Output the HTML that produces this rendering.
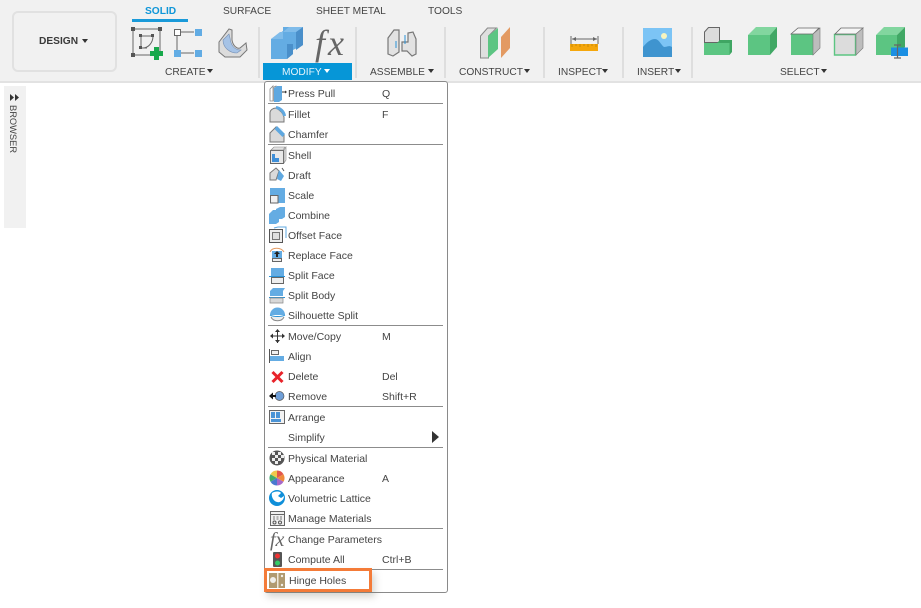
<!DOCTYPE html>
<html><head><meta charset="utf-8">
<style>
html,body{margin:0;padding:0;background:#fff;}
#p{position:relative;width:921px;height:608px;overflow:hidden;background:#fff;font-family:"Liberation Sans",sans-serif;font-size:10.5px;color:#444;}
#p div{position:absolute;white-space:nowrap;}
.t{line-height:14px;}
.l{line-height:14px;font-size:10.2px;top:66px;}
.sep{width:175px;height:1px;left:268px;background:#8c8c8c;}
.m{left:288px;line-height:14px;margin-top:1px;}
.k{left:382px;line-height:14px;margin-top:1px;}
svg{position:absolute;left:0;top:0;}
</style></head><body><div id="p">
<div style="left:0;top:0;width:921px;height:81px;background:#f1f1f1;border-bottom:2px solid #e2e2e2;"></div>
<div style="left:12px;top:11px;width:101px;height:57px;border:2px solid #e1e1e1;border-radius:6px;"></div>
<div class="t" style="left:39px;top:35px;font-weight:bold;color:#3a3a3a;font-size:10.2px;">DESIGN</div>
<div class="t" style="left:145px;top:5px;color:#0f96d8;font-weight:bold;font-size:10.2px;">SOLID</div>
<div style="left:132px;top:19px;width:56px;height:3px;background:#1a9ad9;"></div>
<div class="t" style="left:223px;top:5px;font-size:10.2px;">SURFACE</div>
<div class="t" style="left:316px;top:5px;font-size:10.2px;">SHEET METAL</div>
<div class="t" style="left:428px;top:5px;font-size:10.2px;">TOOLS</div>
<div style="left:263px;top:63px;width:89px;height:17px;background:#0696d7;"></div>
<div class="l" style="left:165px;">CREATE</div>
<div class="l" style="left:282px;color:#e4f3fb;">MODIFY</div>
<div class="l" style="left:370px;">ASSEMBLE</div>
<div class="l" style="left:459px;">CONSTRUCT</div>
<div class="l" style="left:558px;">INSPECT</div>
<div class="l" style="left:637px;">INSERT</div>
<div class="l" style="left:780px;">SELECT</div>
<div class="t" style="left:4px;top:86px;width:22px;height:142px;background:#f1f1f1;"></div>
<div style="left:7px;top:105px;transform-origin:0 0;transform:translate(12px,0) rotate(90deg);line-height:12px;font-size:9.3px;">BROWSER</div>
<div style="left:264px;top:81px;width:182px;height:510px;background:#fff;border:1px solid #8a8a8a;border-radius:3px;"></div>
<div class="sep" style="top:103px"></div><div class="sep" style="top:144px"></div><div class="sep" style="top:325px"></div><div class="sep" style="top:406px"></div><div class="sep" style="top:447px"></div><div class="sep" style="top:528px"></div><div class="sep" style="top:569px"></div>
<div class="m" style="top:86px">Press Pull</div><div class="k" style="top:86px">Q</div>
<div class="m" style="top:107px">Fillet</div><div class="k" style="top:107px">F</div>
<div class="m" style="top:127px">Chamfer</div>
<div class="m" style="top:148px">Shell</div>
<div class="m" style="top:168px">Draft</div>
<div class="m" style="top:188px">Scale</div>
<div class="m" style="top:208px">Combine</div>
<div class="m" style="top:228px">Offset Face</div>
<div class="m" style="top:248px">Replace Face</div>
<div class="m" style="top:268px">Split Face</div>
<div class="m" style="top:288px">Split Body</div>
<div class="m" style="top:308px">Silhouette Split</div>
<div class="m" style="top:329px">Move/Copy</div><div class="k" style="top:329px">M</div>
<div class="m" style="top:349px">Align</div>
<div class="m" style="top:369px">Delete</div><div class="k" style="top:369px">Del</div>
<div class="m" style="top:389px">Remove</div><div class="k" style="top:389px">Shift+R</div>
<div class="m" style="top:410px">Arrange</div>
<div class="m" style="top:430px">Simplify</div>
<div class="m" style="top:451px">Physical Material</div>
<div class="m" style="top:471px">Appearance</div><div class="k" style="top:471px">A</div>
<div class="m" style="top:491px">Volumetric Lattice</div>
<div class="m" style="top:511px">Manage Materials</div>
<div class="m" style="top:532px">Change Parameters</div>
<div class="m" style="top:552px">Compute All</div><div class="k" style="top:552px">Ctrl+B</div>
<div class="m" style="top:573px;left:289px">Hinge Holes</div>
<div style="left:264px;top:568px;width:102px;height:18px;border:3px solid #f47b38;box-shadow:3px 5px 7px rgba(110,110,95,.28);"></div>
<svg width="921" height="608" viewBox="0 0 921 608">
<!-- separators -->
<g fill="#dedede"><rect x="258" y="27" width="2" height="51"/><rect x="355" y="27" width="2" height="51"/><rect x="444" y="27" width="2" height="51"/><rect x="543" y="27" width="2" height="51"/><rect x="622" y="27" width="2" height="51"/><rect x="691" y="27" width="2" height="51"/></g>
<!-- carets -->
<g fill="#333"><path d="M82 39h6l-3 4z"/><path d="M207 69h6l-3 4z"/><path d="M428 69h6l-3 4z"/><path d="M524 69h6l-3 4z"/><path d="M602 69h6l-3 4z"/><path d="M675 69h6l-3 4z"/><path d="M821 69h6l-3 4z"/><path d="M432 431l7 6-7 6z"/><path d="M10 94l4 3.500-4 3.500zM15 94l4 3.500-4 3.500z"/></g>
<path d="M324 69h6l-3 4z" fill="#fff"/>
<!-- create sketch -->
<g fill="none" stroke="#666" stroke-width="1"><rect x="133" y="29" width="27" height="26"/><path d="M141 36v12h6M141 36h12M153 36c0 7-5 12-10 12" /></g>
<g fill="#555"><rect x="131" y="27" width="4" height="4"/><rect x="158" y="27" width="4" height="4"/><rect x="131" y="53" width="4" height="4"/><rect x="139" y="34" width="3" height="3"/><rect x="151" y="34" width="3" height="3"/><rect x="139" y="46" width="3" height="3"/></g>
<path d="M154 47h5v4h4v5h-4v4h-5v-4h-4v-5h4z" fill="#17a84b"/>
<!-- form -->
<rect x="174.500" y="29.500" width="6" height="6" fill="#fff" stroke="#666"/>
<path d="M181 32h13M177 36v15M181 53h13" stroke="#666" fill="none"/>
<g fill="#62ace4"><rect x="195" y="29" width="7" height="7"/><rect x="174" y="50" width="7" height="7"/><rect x="195" y="50" width="7" height="7"/></g>
<!-- ribbed bracket -->
<path d="M219 42l10-13 3 1v10c1 6 5 9 8 8l6-5 1 7-7 7h-15l-6-5z" fill="#dcdcdc" stroke="#777"/>
<path d="M223 40c0 8 7 13 14 13l4-3c-6 0-10-4-11-12l-1-4z" fill="#a6c3e6" stroke="#7891b5" stroke-width=".6"/>
<!-- combine -->
<path d="M283 27h20v18l-10 5v4l-6 5h-16v-20l12-8z" fill="#64ace3"/>
<path d="M296 32l7-5v18l-7 5zM287 44l6 0v10l-6 5z" fill="#4a8fca"/><path d="M283 32l6-5h14l-7 5zM271 39l9-7h3v7z" fill="#80bcea"/>
<!-- assemble -->
<path d="M388 38l6-8h5v22l-6 4-5-2z" fill="#e2e2e2" stroke="#777" stroke-width="1.200"/>
<path d="M408 42v-9l5-1 3 7 0 15-4 2-5-5h-5v-9z" fill="#e2e2e2" stroke="#777" stroke-width="1.200"/>
<path d="M396 41v7M405 35v9" stroke="#2a91d5" stroke-width="1"/>
<!-- construct -->
<path d="M480.500 36l7-8h9l-8 8v22h-8z" fill="#dfdfdf" stroke="#888"/>
<path d="M488 36l10-8v21l-10 9z" fill="#5dc583"/><path d="M501 37l9-10v21l-9 10z" fill="#e39a62"/>
<!-- inspect -->
<path d="M571 36v8M598 36v8" stroke="#666"/><path d="M572 39h25" stroke="#666"/><path d="M572 39l4-2v4zM597 39l-4-2v4z" fill="#666"/>
<rect x="570" y="44" width="28" height="7" fill="#f5a70c"/><path d="M572 44v3M576 44v2M580 44v3M584 44v2M588 44v3M592 44v2M596 44v3" stroke="#b67c08" stroke-width=".7"/>
<!-- insert -->
<rect x="643" y="28" width="29" height="29" fill="#7cc4f5"/>
<path d="M643 57V47c4-5 8-8 12-8 4 0 6 6 9 8 3 0 5-2 8 0v10z" fill="#3f94cf"/>
<circle cx="664" cy="36" r="3" fill="#f7f4bf"/>
<!-- select 1 -->
<path d="M704.500 32l4-4.500h11v15h-15z" fill="#dcdcdc" stroke="#666" stroke-width="1"/>
<rect x="704" y="43" width="25.500" height="12" fill="#5cc582"/>
<path d="M717 43l3-3h12l-2.500 3zM729.500 43l2.500-3v12l-2.500 3z" fill="#3fa663"/><path d="M704 42.500h13" stroke="#666"/>
<!-- select 2 -->
<path d="M748 35h22v20h-22z" fill="#5cc582"/><path d="M748 35l8-8h21l-7 8z" fill="#82d69f"/><path d="M770 35l7-8v20l-7 8z" fill="#41a865"/>
<!-- select 3 -->
<path d="M791 34h22v21h-22z" fill="#5cc582"/><path d="M791 34l7-6h21l-6 6z" fill="#f5f5f5" stroke="#666" stroke-width=".8"/><path d="M813 34l7-6v20l-7 7z" fill="#bdbdbd" stroke="#777" stroke-width=".6"/>
<!-- select 4 -->
<path d="M834.500 34.500h21v20.500h-21z" fill="#dcdcdc" stroke="#5cc582" stroke-width="1.400"/><path d="M835 34l6-6h22l-7 6z" fill="#f5f5f5" stroke="#666" stroke-width=".8"/><path d="M856 34l7-6v20l-7 7z" fill="#bdbdbd" stroke="#777" stroke-width=".6"/>
<!-- select 5 -->
<path d="M876 35h21v20h-21z" fill="#5cc582"/><path d="M876 35l8-8h21l-8 8z" fill="#82d69f"/><path d="M897 35l8-8v20l-8 8z" fill="#41a865"/>
<rect x="891" y="47.500" width="17" height="8.500" fill="#1b8fe3"/><path d="M894 45h7M897.500 45v13M894 58h7" stroke="#666" fill="none" stroke-width="1.200"/>
<!-- menu icons -->
<path d="M270 89l3-3v15h-3zM274 101V87l2-1v15z" fill="#fff" stroke="#888" stroke-width=".8"/>
<path d="M274 88l3-2h5v14l-3 2h-5z" fill="#5fa8e0"/><path d="M282 92h3" stroke="#333"/><path d="M285 90.500l2 1.500-2 1.500z" fill="#333"/>
<!-- fillet -->
<path d="M270 122v-9c0-3 3-5 6-5 4 2 7 5 8 9v5z" fill="#dadada" stroke="#777"/><path d="M276 107.500c4 .5 8 4 8.500 8.500" fill="none" stroke="#5fa8e0" stroke-width="3"/>
<!-- chamfer -->
<path d="M270 142v-9l6-6 8 8v7z" fill="#dadada" stroke="#777"/><path d="M277 126l8 8-2.500 3-8-8z" fill="#5fa8e0"/>
<!-- shell -->
<rect x="270.500" y="150.500" width="13" height="13" fill="#e8e8e8" stroke="#666"/><path d="M271 150l3-3h11l-2 3zM284 150l2-3v13l-2 3z" fill="#e2e2e2" stroke="#888" stroke-width=".6"/><path d="M272 154h3v4h4v4h-7z" fill="#3f8fd8"/>
<!-- draft -->
<path d="M270 180v-7l6-5 3 3-3 9z" fill="#dadada" stroke="#777"/><path d="M279 170l5 6-3 5-4-2z" fill="#5fa8e0"/><path d="M282 168l2 3" stroke="#555"/>
<!-- scale -->
<rect x="270" y="188" width="15" height="15" fill="#64ace3"/><rect x="270.500" y="195.500" width="7.500" height="7.500" fill="#f0f0f0" stroke="#666"/>
<!-- combine -->
<path d="M269 214l4-4h3v-1l4-2h5v10l-3 2h-3v3l-3 2h-7z" fill="#64ace3"/>
<!-- offset -->
<path d="M274 228l4-1h8v11" fill="none" stroke="#5fa8e0"/><rect x="269.500" y="229.500" width="13" height="13" fill="#eee" stroke="#555"/><rect x="272.500" y="232.500" width="7" height="7" fill="#e0e0e0" stroke="#777"/>
<!-- replace -->
<path d="M270 252c2-5 11-5 14 0" fill="none" stroke="#e39a62"/><rect x="272" y="251" width="10" height="7" fill="#64ace3"/><path d="M277 251l3 3h-2v3h-2v-3h-2z" fill="#222"/><rect x="272.500" y="258.500" width="9" height="3" fill="#eee" stroke="#666"/>
<!-- split face -->
<rect x="271" y="268" width="13" height="8" fill="#64ace3"/><path d="M269 276.500h16" stroke="#2a91d5"/><rect x="271.500" y="277.500" width="12" height="6" fill="#eee" stroke="#666"/>
<!-- split body -->
<path d="M270 291l3-3h12l-2 3v5h-13z" fill="#64ace3"/><path d="M269 297.500h16" stroke="#2a91d5"/><path d="M270 298h13v5h-13z" fill="#d8d8d8" stroke="#888" stroke-width=".7"/>
<!-- silhouette -->
<path d="M270 315a7.500 7.500 0 0 1 15 0z" fill="#64ace3"/><path d="M270 315c3 2 12 2 15 0" stroke="#2a91d5" fill="none"/><path d="M271 317a7 6 0 0 0 13 0" fill="#eee" stroke="#888"/>
<!-- move -->
<path d="M271 336h13M277.500 330v13" stroke="#333"/><path d="M277.500 329l2.500 3h-5zM277.500 343l2.500-3h-5zM270 336l3-2.500v5zM285 336l-3-2.500v5z" fill="#333"/>
<!-- align -->
<path d="M269.500 349v14" stroke="#555"/><rect x="271.500" y="350.500" width="7" height="4" fill="#f0f0f0" stroke="#666"/><rect x="270" y="356" width="14" height="5" fill="#64ace3"/>
<!-- delete -->
<path d="M272.500 372l10 10M282.500 372l-10 10" stroke="#e8232a" stroke-width="3"/>
<!-- remove -->
<circle cx="279.500" cy="396" r="4.500" fill="#6f9fd8" stroke="#555" stroke-width=".7"/><path d="M269 396l4-3.500v2.500h3v2h-3v2.500z" fill="#111"/>
<!-- arrange -->
<rect x="269.500" y="410.500" width="15" height="13" fill="#f2f2f2" stroke="#666"/><rect x="271" y="412" width="4" height="6" fill="#4b94d6"/><rect x="276" y="412" width="4" height="6" fill="#4b94d6"/><rect x="271" y="419" width="10" height="3" fill="#4b94d6"/>
<!-- physical -->
<circle cx="277" cy="458" r="7.500" fill="#555"/><g fill="#eee"><rect x="272" y="452" width="3" height="3"/><rect x="278" y="452" width="3" height="3"/><rect x="275" y="455" width="3" height="3"/><rect x="281" y="455" width="3" height="3"/><rect x="272" y="458" width="3" height="3"/><rect x="278" y="458" width="3" height="3"/><rect x="275" y="461" width="3" height="3"/></g>
<!-- appearance -->
<path d="M277 478v-7.500a7.500 7.500 0 0 1 6.500 3.700z" fill="#e2574a"/><path d="M277 478l6.500-3.800a7.500 7.500 0 0 1 0 7.500z" fill="#ef8b3c"/><path d="M277 478l6.500 3.800a7.500 7.500 0 0 1-6.500 3.700z" fill="#a768c9"/><path d="M277 478v7.500a7.500 7.500 0 0 1-6.500-3.700z" fill="#4a78d0"/><path d="M277 478l-6.500 3.800a7.500 7.500 0 0 1 0-7.500z" fill="#43ab6c"/><path d="M277 478l-6.500-3.800a7.500 7.500 0 0 1 6.500-3.700z" fill="#f0c84a"/>
<!-- lattice -->
<circle cx="277" cy="498" r="8" fill="#0f8fd9"/><path d="M272 493c3-2 8-2 9 0l-3 3 3 2 3-2c0 4-4 7-7 6-4-1-6-6-5-9z" fill="#fff"/>
<!-- manage -->
<rect x="270.500" y="511.500" width="14" height="14" fill="#f0f0f0" stroke="#666"/><path d="M271 514.500h13" stroke="#666"/><path d="M273 517h2M276.500 517h2M280 517h2M273 519h2M276.500 519h2M280 519h2" stroke="#777"/><circle cx="274.500" cy="522.500" r="1.500" fill="none" stroke="#555"/><circle cx="280" cy="522.500" r="1.500" fill="none" stroke="#555"/>
<!-- compute -->
<rect x="273" y="552" width="9" height="15" rx="1" fill="#555"/><circle cx="277.500" cy="556" r="2.500" fill="#e33"/><circle cx="277.500" cy="563" r="2.500" fill="#3c6"/>
<!-- hinge -->
<rect x="269" y="573" width="16" height="15" fill="#b09a70"/><rect x="277" y="573" width="1.500" height="15" fill="#efe8da"/><circle cx="273" cy="580" r="3" fill="#efeeea"/><circle cx="282" cy="576" r="1.200" fill="#f2f0ea"/><circle cx="282" cy="585" r="1.200" fill="#f2f0ea"/>
</svg>
<div style="left:315px;top:21px;font:italic 36px/44px 'Liberation Serif',serif;color:#666;letter-spacing:3px;">fx</div>
<div style="left:270px;top:529px;font:italic 20px/22px 'Liberation Serif',serif;color:#666;">fx</div>
</div></body></html>
